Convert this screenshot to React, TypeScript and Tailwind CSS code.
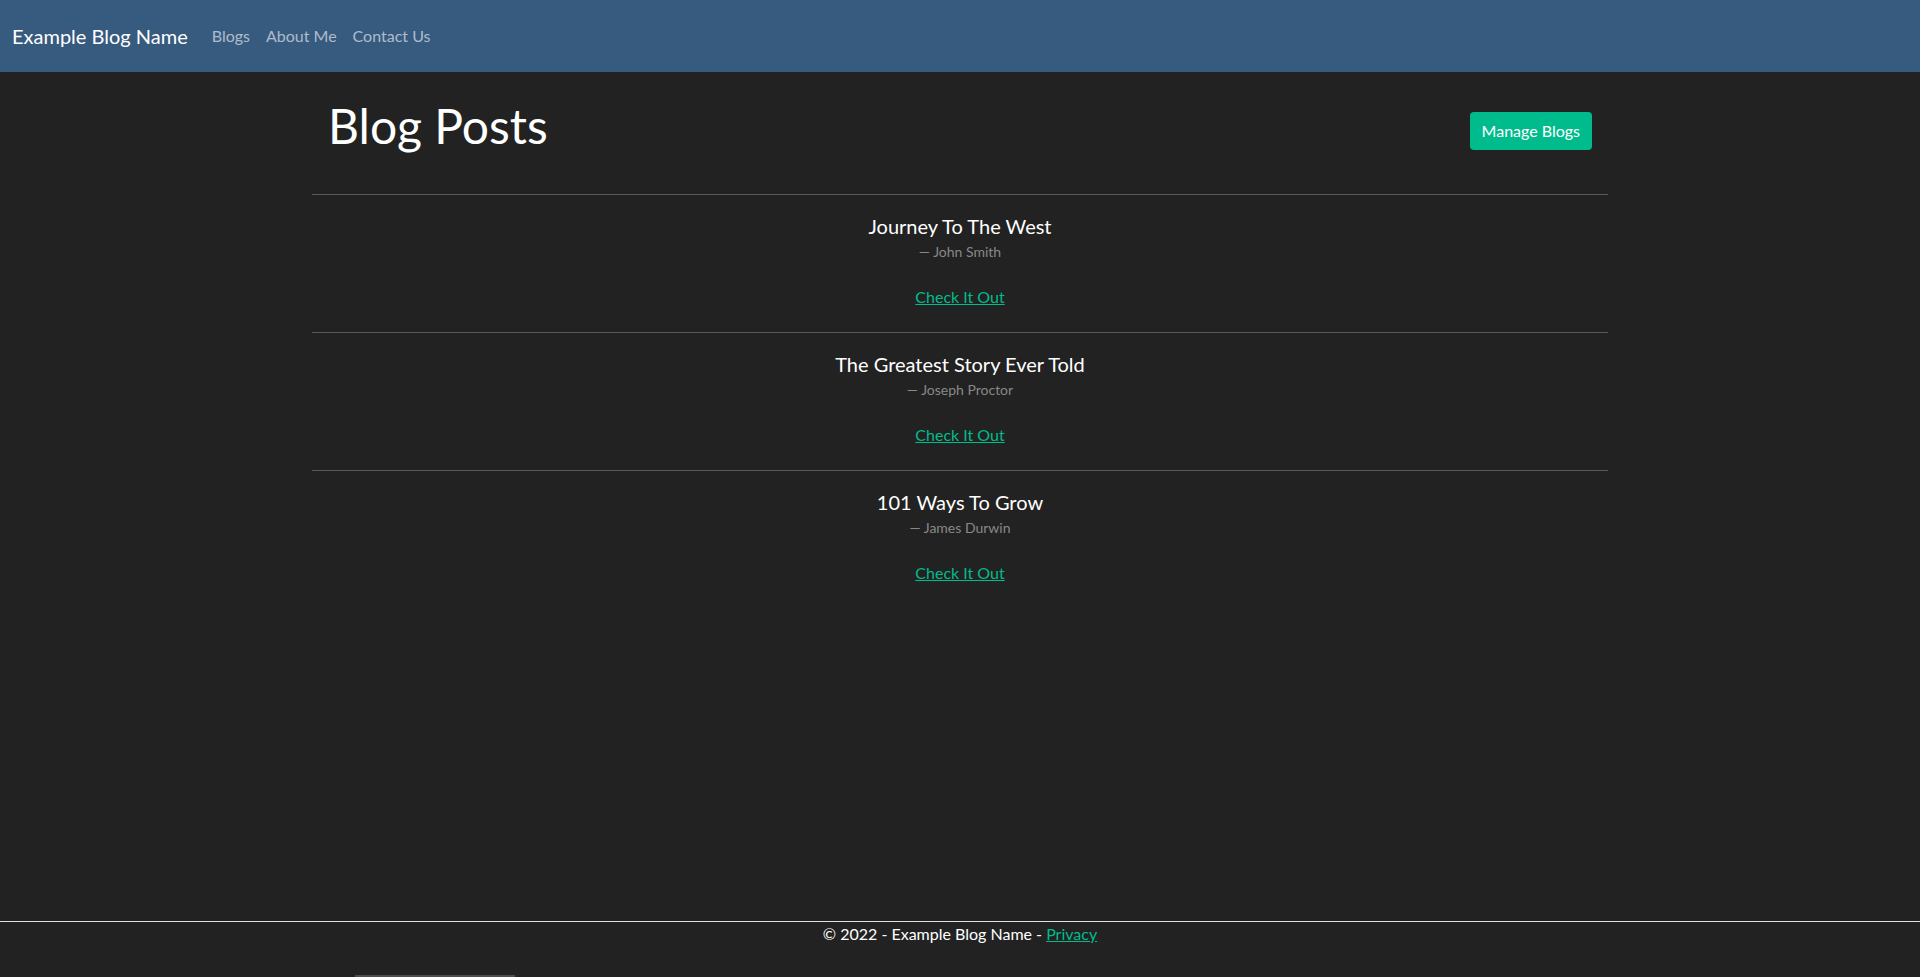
interface Post {
  title: string;
  author: string;
}

const posts: Post[] = [
  { title: "Journey To The West", author: "John Smith" },
  { title: "The Greatest Story Ever Told", author: "Joseph Proctor" },
  { title: "101 Ways To Grow", author: "James Durwin" },
];

function NavBar() {
  return (
    <nav className="h-[72px] bg-[#375a7f] flex items-center px-3">
      <a href="#" className="text-[20px] leading-[30px] text-white mr-4">
        Example Blog Name
      </a>
      <ul className="flex">
        {["Blogs", "About Me", "Contact Us"].map((item) => (
          <li key={item}>
            <a
              href="#"
              className="block px-2 text-[16px] leading-[24px] text-white/60"
            >
              {item}
            </a>
          </li>
        ))}
      </ul>
    </nav>
  );
}

interface PostRowProps {
  post: Post;
}

function PostRow({ post }: PostRowProps) {
  return (
    <div>
      <div className="h-px bg-[#595959]" />
      <div className="flex flex-col items-center pt-[19px] pb-[23px]">
        <h5 className="text-[20px] leading-[24px] text-white">{post.title}</h5>
        <div className="mt-[3px] text-[14px] leading-[21px] text-[#888888]">
          {"\u2014\u00a0"}
          {post.author}
        </div>
        <a
          href="#"
          className="mt-[23px] text-[16px] leading-[24px] text-[#00bc8c] underline"
        >
          Check It Out
        </a>
      </div>
    </div>
  );
}

export default function App() {
  return (
    <div className="min-h-[977px] flex flex-col bg-[#222222] text-white font-['Lato',sans-serif]">
      <NavBar />
      <main className="flex-1">
        <div className="w-[1296px] mx-auto">
          <div className="flex justify-between items-end pt-[25px] px-4">
            <h1 className="text-[48px] leading-[58px] text-white">
              Blog Posts
            </h1>
            <button className="mb-[5px] h-[38px] px-3 rounded bg-[#00bc8c] text-[16px] text-white">
              Manage Blogs
            </button>
          </div>
          <div className="mt-[39px]">
            {posts.map((post) => (
              <PostRow key={post.title} post={post} />
            ))}
          </div>
        </div>
      </main>
      <footer className="border-t border-[#dee2e6]">
        <div className="text-center text-[16px] leading-[24px] text-white">
          © 2022 - Example Blog Name -{" "}
          <a href="#" className="text-[#00bc8c] underline">
            Privacy
          </a>
        </div>
        <div className="h-[29px]" />
        <div className="flex">
          <div className="ml-[355px] w-[160px] h-[2px] bg-[#4d4d4d]" />
        </div>
      </footer>
    </div>
  );
}
